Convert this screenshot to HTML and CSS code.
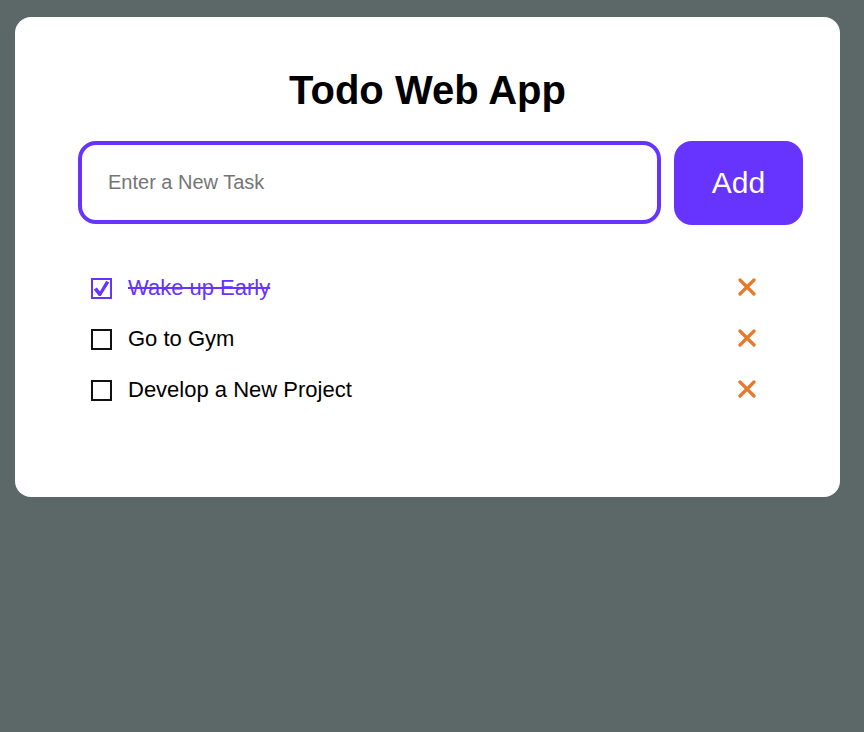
FILE: index.html
```html
<!DOCTYPE html>
<html lang="en">
<head>
<meta charset="utf-8">
<title>Todo Web App</title>
<link rel="stylesheet" href="styles.css">
</head>
<body>
<div class="card">
  <h1 class="title">Todo Web App</h1>
  <div class="entry">
    <input class="task-input" type="text" placeholder="Enter a New Task">
    <button class="add-btn">Add</button>
  </div>
  <ul class="tasks">
    <li class="task done">
      <span class="box">
        <svg viewBox="0 0 17 17" width="17" height="17"><path d="M0.8 9.4 L3.9 7.4 L6.9 11.4 L13.2 0.8 L16.2 2.6 L7.8 16 L5.8 16 Z" fill="#6633ff"/></svg>
      </span>
      <span class="label">Wake up Early</span>
      <span class="remove"><svg viewBox="0 0 18 18" width="18" height="18"><path d="M2 2 L16 16 M16 2 L2 16" stroke="#e8792b" stroke-width="3.2" stroke-linecap="round"/></svg></span>
    </li>
    <li class="task">
      <span class="box"></span>
      <span class="label">Go to Gym</span>
      <span class="remove"><svg viewBox="0 0 18 18" width="18" height="18"><path d="M2 2 L16 16 M16 2 L2 16" stroke="#e8792b" stroke-width="3.2" stroke-linecap="round"/></svg></span>
    </li>
    <li class="task">
      <span class="box"></span>
      <span class="label">Develop a New Project</span>
      <span class="remove"><svg viewBox="0 0 18 18" width="18" height="18"><path d="M2 2 L16 16 M16 2 L2 16" stroke="#e8792b" stroke-width="3.2" stroke-linecap="round"/></svg></span>
    </li>
  </ul>
</div>
</body>
</html>
```

FILE: styles.css
```css
* { box-sizing: border-box; }

html, body {
  margin: 0;
  padding: 0;
  background: #5c6868;
  height: 100%;
}

body {
  font-family: "Liberation Sans", Arial, sans-serif;
  padding: 17px 0 0 15px;
}

.card {
  width: 825px;
  height: 480px;
  background: #ffffff;
  border-radius: 16px;
  padding: 51px 37px 0 63px;
}

.title {
  margin: 0 -37px 28px -63px;
  text-align: center;
  font-size: 40px;
  font-weight: bold;
  color: #000;
  line-height: 45px;
}

.entry {
  display: flex;
  gap: 13px;
  height: 84px;
}

.task-input {
  flex: 1;
  height: 83px;
  border: 4px solid #6633ff;
  border-radius: 18px;
  padding: 0 0 0 26px;
  font-family: "Liberation Sans", Arial, sans-serif;
  font-size: 20px;
  color: #000;
  outline: none;
  background: #fff;
}

.task-input::placeholder {
  color: #757575;
}

.add-btn {
  width: 129px;
  height: 84px;
  border: none;
  border-radius: 18px;
  background: #6633ff;
  color: #fff;
  font-family: "Liberation Sans", Arial, sans-serif;
  font-size: 30px;
  padding: 0;
}

.tasks {
  list-style: none;
  margin: 37px 0 0 0;
  padding: 0 47px 0 13px;
}

.task {
  display: flex;
  align-items: center;
  height: 51px;
  font-size: 22px;
  color: #000;
}

.box {
  width: 21px;
  height: 21px;
  border: 2px solid #111;
  display: flex;
  align-items: center;
  justify-content: center;
  flex: none;
  margin-right: 16px;
  margin-top: 2px;
}

.done .box {
  border-color: #6633ff;
}

.done .label {
  color: #6633ff;
  text-decoration: line-through;
  text-decoration-thickness: 2px;
}

.remove {
  margin-left: auto;
  display: flex;
  margin-bottom: 2px;
}
```
